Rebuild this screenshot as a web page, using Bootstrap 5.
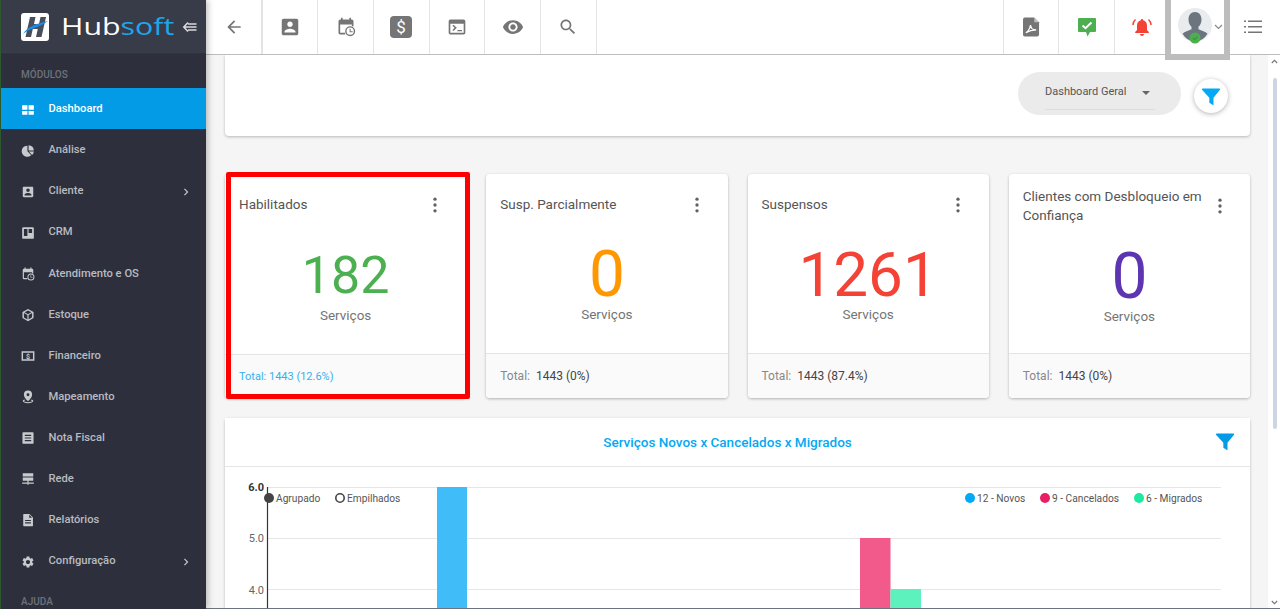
<!DOCTYPE html>
<html lang="pt-BR">
<head>
<meta charset="utf-8">
<title>Hubsoft Dashboard</title>
<link rel="stylesheet" href="https://cdn.jsdelivr.net/npm/bootstrap@5.3.0/dist/css/bootstrap.min.css">
<style>
html,body{height:609px;overflow:hidden}
body{font-family:Roboto,"Liberation Sans",sans-serif;background:#f5f5f5;color:#555;display:flex}
.ico{fill:currentColor;display:block;flex:none}
.side{width:206px;flex:none;height:609px;background:#2d303c;border-left:1px solid #2c5a2c;box-shadow:2px 0 6px rgba(0,0,0,.25);position:relative;z-index:3;overflow:hidden}
.side-top{height:54px;background:#383b48;border-bottom:1px solid #30333f;display:flex;align-items:center;padding-left:20px}
.logo-word{width:113px;margin-left:12px;flex:none}
.logo-text{display:inline-block;font-family:"Open Sans",sans-serif;font-size:23px;line-height:28px;color:#fff;font-weight:400;white-space:nowrap;transform:scaleX(1.32);transform-origin:left center}
.logo-text span{color:#1ea7e8}
.collapse-ico{color:#d8d9dd;margin-left:8px}
.sec-label{height:34px;padding:14px 0 0 20px;font-size:10px;line-height:14px;font-weight:500;color:#6e717b}
.side .nav-link{height:41.1px;display:flex;align-items:center;padding:2px 0 0 20px;font-size:11.2px;font-weight:500;color:#b9bbc0}
.side .nav-link.active{background:#039be5;color:#fff}
.side .nav-link .ico{margin-right:13.500px;color:#c9cacd}
.side .nav-link.active .ico{color:#fff}
.side .nav-link .ico.chev{margin-left:auto;margin-right:13px;color:#c9cacd}
.right-col{flex:1;min-width:0;display:flex;flex-direction:column;height:609px}
.topbar{height:55px;flex:none;background:#fff;border-bottom:1px solid #bdbdbd;display:flex;position:relative;z-index:2}
.tb-btn{width:55.7px;height:54px;display:flex;align-items:center;justify-content:center;border-right:1px solid #e4e4e4;color:#757575;flex:none}
.tb-btn.first{width:56.500px;border-right:2px solid #e4e4e4;padding-left:1px}
.tb-right{margin-left:auto;display:flex;height:54px}
.tb-btn.lft{border-right:0;border-left:1px solid #e4e4e4;width:55.5px}
.tb-btn.bare{border:0;padding-left:2px}
.profile{width:62px;display:flex;align-items:center;padding-left:14px;position:relative;margin-left:-5px;margin-right:-2px}
.profile-chev{margin-left:2px}
.profile-mark{position:absolute;left:1px;right:-4px;top:-1px;height:61px;border:6px solid #bdbdbd;border-top:0;pointer-events:none}
.body-row{flex:1;display:flex;min-height:0}
.content{flex:1;min-width:0;padding:0 18px 0 19px;overflow:hidden}
.scroll-track{width:12px;flex:none;background:#fff;display:flex;flex-direction:column;align-items:center;color:#777}
.scroll-arrow{height:12px;display:flex;align-items:center;justify-content:center}
.scroll-thumb{width:4px;height:351px;background:#ccd6e2;border-radius:2px;margin:11px 0 0 2px}
.bottom-rule{height:1px;flex:none;background:#6c757d}
.filter-card{height:81px;border:0;border-radius:0 0 4px 4px;box-shadow:0 1px 3px rgba(0,0,0,.25);display:flex;flex-direction:row;align-items:center;justify-content:flex-end;padding:0 22px 0 0;margin-bottom:38px}
.sel-pill{width:163px;height:43px;background:#ebebeb;border-radius:22px;margin-right:13px;margin-top:-5px;padding:0 26px 0 27px;display:flex;flex-direction:column;justify-content:center}
.sel-line{display:flex;align-items:center;justify-content:space-between;font-size:11px;color:#555;height:33px;border-bottom:1px solid #ddd;padding-right:5px}
.sel-caret{width:0;height:0;border-left:4.5px solid transparent;border-right:4.5px solid transparent;border-top:4.5px solid #666}
.round-filter{width:34px;height:34px;border-radius:50%;background:#fff;box-shadow:0 1px 5px rgba(0,0,0,.3);display:flex;align-items:center;justify-content:center;color:#03a9f4;margin-top:1px}
.kpi-grid{display:grid;grid-template-columns:repeat(4,1fr);gap:20px;margin-bottom:20px}
.kpi{height:224px;border:0;border-radius:4px;box-shadow:0 1px 3px rgba(0,0,0,.28);position:relative;color:#555;text-align:center}
.kpi-head{height:60px;display:flex;align-items:center;justify-content:space-between;text-align:left;padding:0 21px 0 14px;font-size:13.5px;line-height:19px;color:#555;flex:none}
.kpi-head .ico{color:#616161;margin-top:2px}
.kpi-num{font-size:64px;line-height:56px;margin-top:13px;font-weight:400;height:56px}
.kpi-sub{font-size:13.5px;line-height:20px;margin-top:1px;color:#757575}
.kpi .card-body{padding:0;flex:1}
.kpi .card-footer{height:45px;flex:none;background:#fafafa;border-top:1px solid #e3e3e3;padding:0 14px;text-align:left;font-size:12px;line-height:44px;color:#444;border-radius:0 0 4px 4px}
.kpi .card-footer span{color:#888;margin-right:3px}
.kpi-a .kpi-num{margin-top:14px;font-size:52px}
.kpi-c .kpi-num{font-size:62px}
.kpi-a .card-footer{height:44px;color:#35b0ee;font-size:11px;line-height:43px}
.kpi-d .kpi-head{padding-right:20px;padding-top:3px}
.kpi-d .kpi-head .ico{margin-top:0}
.kpi-d .kpi-num{margin-top:15px}
.red-mark{position:absolute;left:1px;top:-2px;width:244px;height:227px;border:5px solid #f00;border-radius:2px;pointer-events:none}
.chart-card{height:300px;border:0;border-radius:4px;box-shadow:0 1px 3px rgba(0,0,0,.25)}
.chart-head{height:49px;border-bottom:1px solid #e5e5e5;display:flex;align-items:center;justify-content:center;position:relative;font-size:13.5px;font-weight:500;color:#03a9f4;background:#fff;padding-right:20px}
.chart-filter{position:absolute;right:15px;top:13px;color:#039be5}
.chart-svg{display:block}
.chart-svg text{font-family:Roboto,"Liberation Sans",sans-serif;font-size:10.2px;fill:#555}
.chart-svg .ytick{fill:#666;font-size:11px}
.chart-svg .ytick-top{fill:#333;font-weight:700}
.bell-ico{display:block;flex:none}
</style>
</head>
<body>
<svg width="0" height="0" class="position-absolute">
<defs>
<symbol id="i-box" viewBox="0 0 24 24"><path d="M3 5v14c0 1.100.89 2 2 2h14c1.100 0 2-.9 2-2V5c0-1.100-.9-2-2-2H5c-1.110 0-2 .9-2 2zm12 4c0 1.660-1.340 3-3 3s-3-1.340-3-3 1.340-3 3-3 3 1.340 3 3zm-9 8c0-2 4-3.100 6-3.100s6 1.100 6 3.100v1H6v-1z"/></symbol>
<symbol id="i-back" viewBox="0 0 24 24"><path d="M20 11H7.830l5.590-5.590L12 4l-8 8 8 8 1.410-1.410L7.830 13H20v-2z"/></symbol>
<symbol id="i-search" viewBox="0 0 24 24"><path d="M15.500 14h-.79l-.28-.27C15.410 12.590 16 11.110 16 9.500 16 5.910 13.090 3 9.500 3S3 5.910 3 9.500 5.910 16 9.500 16c1.610 0 3.090-.59 4.230-1.570l.27.28v.79l5 4.990L20.490 19l-4.990-5zm-6 0C7.010 14 5 11.990 5 9.500S7.010 5 9.500 5 14 7.010 14 9.500 11.990 14 9.500 14z"/></symbol>
<symbol id="i-eye" viewBox="0 0 24 24"><path d="M12 4.500C7 4.500 2.730 7.610 1 12c1.730 4.390 6 7.500 11 7.500s9.270-3.110 11-7.500c-1.730-4.390-6-7.500-11-7.500zM12 17c-2.760 0-5-2.240-5-5s2.240-5 5-5 5 2.240 5 5-2.240 5-5 5zm0-8c-1.660 0-3 1.340-3 3s1.340 3 3 3 3-1.340 3-3-1.340-3-3-3z"/></symbol>
<symbol id="i-cal" viewBox="0 0 24 24"><path d="M6 1h2v2h8V1h2v2h1a2 2 0 0 1 2 2v6h-2V9H5v10h6v2H5a2 2 0 0 1-2-2V5a2 2 0 0 1 2-2h1z"/><path fill-rule="evenodd" d="M17 11a6 6 0 1 1 0 12 6 6 0 0 1 0-12zm0 1.700a4.300 4.300 0 1 0 0 8.600 4.300 4.300 0 0 0 0-8.600zM16.300 14h1.200v3h2.500v1.200h-3.700z"/></symbol>
<symbol id="i-term" viewBox="0 0 24 24"><path fill-rule="evenodd" d="M4 3h16a2 2 0 0 1 2 2v14a2 2 0 0 1-2 2H4a2 2 0 0 1-2-2V5a2 2 0 0 1 2-2zm0 5v11h16V8z"/><path d="M6.500 10.500 7.800 9.200l4 3.800-4 3.800-1.300-1.300 2.600-2.500zM12.500 15.500H18V17h-5.500z"/></symbol>
<symbol id="i-funnel" viewBox="0 0 24 24"><path d="M2 3h20a1 1 0 0 1 .8 1.600L15 14v8.500a.5.500 0 0 1-.8.400L10 20v-6L1.200 4.600A1 1 0 0 1 2 3z"/></symbol>
<symbol id="i-dots" viewBox="0 0 24 24"><circle cx="12" cy="5" r="2"/><circle cx="12" cy="12" r="2"/><circle cx="12" cy="19" r="2"/></symbol>
<symbol id="i-chev" viewBox="0 0 24 24"><path d="M8.600 16.600 13.200 12 8.600 7.400 10 6l6 6-6 6z"/></symbol>
<symbol id="i-grid" viewBox="0 0 24 24"><path d="M2 4h9v7.500H2zM13 4h9v7.500h-9zM2 13.500h9V20H2zM13 13.500h9V20h-9z"/></symbol>
<symbol id="i-pie" viewBox="0 0 24 24"><path d="M11 3v9.500l6.500 6.600A9.500 9.500 0 1 1 11 3z"/><path d="M13 2a9.500 9.500 0 0 1 9 9h-9zM13.500 13H22a9.500 9.500 0 0 1-3 6z"/></symbol>
<symbol id="i-crm" viewBox="0 0 24 24"><path fill-rule="evenodd" d="M4 2h16a2 2 0 0 1 2 2v16a2 2 0 0 1-2 2H4a2 2 0 0 1-2-2V4a2 2 0 0 1 2-2zm1 3v12h6V5zm8 0v7h6V5z"/></symbol>
<symbol id="i-cube" viewBox="0 0 24 24"><path fill-rule="evenodd" d="M12 1.500 21.500 7v10L12 22.500 2.500 17V7zM5 8.400 11 12v7.500l-6-3.400zm14 0V16l-6 3.500V12zM12 4.200 6.200 7.400 12 10.600l5.800-3.200z"/></symbol>
<symbol id="i-pin" viewBox="0 0 24 24"><path fill-rule="evenodd" d="M12 1a7 7 0 0 1 7 7c0 4.500-5 9.500-7 11-2-1.500-7-6.500-7-11a7 7 0 0 1 7-7zm0 4.500a2.500 2.500 0 1 0 0 5 2.500 2.500 0 0 0 0-5z"/><path d="M3 19c0-1 1-2 3-2.600l1.200 1.400C6 18.100 5 18.500 5 19c0 .9 3 1.800 7 1.800s7-.9 7-1.800c0-.5-1-.9-2.200-1.200l1.200-1.400c2 .6 3 1.600 3 2.600 0 2-4 3.500-9 3.500S3 21 3 19z"/></symbol>
<symbol id="i-note" viewBox="0 0 24 24"><path fill-rule="evenodd" d="M4 2h16a1.500 1.500 0 0 1 1.500 1.500v17A1.500 1.500 0 0 1 20 22H4a1.500 1.500 0 0 1-1.500-1.500v-17A1.500 1.500 0 0 1 4 2zm2.500 4.500v2h11v-2zm0 4.500v2h11v-2zm0 4.500v2h11v-2z"/></symbol>
<symbol id="i-net" viewBox="0 0 24 24"><path d="M3 2h18v5.500H3zM3 9.500h18V15H3zM11 15h2v3h9v2h-9v2h-2v-2H2v-2h9z"/></symbol>
<symbol id="i-doc" viewBox="0 0 24 24"><path fill-rule="evenodd" d="M5 1.500h9.500l6 6V22a.800.800 0 0 1-.8.800H5a1.200 1.200 0 0 1-1.200-1.200V2.700A1.200 1.200 0 0 1 5 1.500zM7 12v1.800h10V12zm0 4v1.800h10V16zM14 3v5h5z"/></symbol>
<symbol id="i-gear" viewBox="0 0 24 24"><path d="M19.140 12.940c.04-.3.06-.61.06-.94 0-.32-.02-.64-.07-.94l2.030-1.580a.49.490 0 0 0 .12-.61l-1.920-3.320a.488.488 0 0 0-.59-.22l-2.390.96c-.5-.38-1.030-.7-1.620-.94l-.36-2.540a.484.484 0 0 0-.48-.41h-3.840c-.24 0-.43.17-.47.41l-.36 2.540c-.59.24-1.130.57-1.620.94l-2.390-.96c-.22-.08-.47 0-.59.22L2.740 8.870c-.12.21-.08.47.12.61l2.030 1.580c-.05.3-.09.63-.09.94s.02.64.07.94l-2.030 1.580a.49.490 0 0 0-.12.61l1.920 3.320c.12.22.37.29.59.22l2.390-.96c.5.38 1.030.7 1.620.94l.36 2.540c.05.24.24.41.48.41h3.840c.24 0 .44-.17.47-.41l.36-2.540c.59-.24 1.130-.56 1.620-.94l2.390.96c.22.08.47 0 .59-.22l1.920-3.320c.12-.22.07-.47-.12-.61l-2.010-1.580zM12 15.600c-1.980 0-3.600-1.620-3.600-3.600s1.620-3.600 3.600-3.600 3.600 1.620 3.600 3.600-1.620 3.600-3.600 3.600z"/></symbol>
</defs>
</svg>

<aside class="side">
  <div class="side-top">
    <svg width="28" height="28" viewBox="0 0 28 28" class="flex-none"><rect width="28" height="28" rx="3" fill="#fff"/><path d="M9 4h5.500l-1.500 7h5l1.500-7H25l-4.500 20H15l1.800-8h-5L10 24H4.500z" fill="#4a4e5c"/><path d="M2 21C7 13 15 11 27 8c-5 3.500-8 5-12 6.500-5 1.500-9 3-13 6.500z" fill="#1a8be6"/></svg>
    <div class="logo-word"><span class="logo-text">Hub<span>soft</span></span></div>
    <svg class="collapse-ico flex-none" width="15" height="12" viewBox="0 0 15 12" fill="none" stroke="currentColor" stroke-width="1.600"><path d="M6 1.500 1.800 6 6 10.500M2 6h12.500M6 3h8.500M6 9h8.500"/></svg>
  </div>
  <div class="sec-label">MÓDULOS</div>
  <nav class="nav flex-column">
    <a class="nav-link active" href="#"><svg class="ico" width="14" height="14"><use href="#i-grid"/></svg>Dashboard</a>
    <a class="nav-link" href="#"><svg class="ico" width="14" height="14"><use href="#i-pie"/></svg>Análise</a>
    <a class="nav-link" href="#"><svg class="ico" width="14" height="14"><use href="#i-box"/></svg>Cliente<svg class="ico chev" width="14" height="14"><use href="#i-chev"/></svg></a>
    <a class="nav-link" href="#"><svg class="ico" width="14" height="14"><use href="#i-crm"/></svg>CRM</a>
    <a class="nav-link" href="#"><svg class="ico" width="14" height="14"><use href="#i-cal"/></svg>Atendimento e OS</a>
    <a class="nav-link" href="#"><svg class="ico" width="14" height="14"><use href="#i-cube"/></svg>Estoque</a>
    <a class="nav-link" href="#"><svg class="ico" width="14" height="14" viewBox="0 0 24 24"><path fill-rule="evenodd" d="M1 4h22v16H1zm2.500 2.500v11h17v-11z"/><text x="12" y="17" text-anchor="middle" font-size="12" font-weight="700" font-family="Roboto,sans-serif">$</text></svg>Financeiro</a>
    <a class="nav-link" href="#"><svg class="ico" width="14" height="14"><use href="#i-pin"/></svg>Mapeamento</a>
    <a class="nav-link" href="#"><svg class="ico" width="14" height="14"><use href="#i-note"/></svg>Nota Fiscal</a>
    <a class="nav-link" href="#"><svg class="ico" width="14" height="14"><use href="#i-net"/></svg>Rede</a>
    <a class="nav-link" href="#"><svg class="ico" width="14" height="14"><use href="#i-doc"/></svg>Relatórios</a>
    <a class="nav-link" href="#"><svg class="ico" width="14" height="14"><use href="#i-gear"/></svg>Configuração<svg class="ico chev" width="14" height="14"><use href="#i-chev"/></svg></a>
  </nav>
  <div class="sec-label">AJUDA</div>
</aside>

<div class="right-col">
  <header class="topbar">
    <div class="tb-btn first"><svg class="ico" width="20" height="20"><use href="#i-back"/></svg></div>
    <div class="tb-btn"><svg class="ico" width="22" height="22"><use href="#i-box"/></svg></div>
    <div class="tb-btn"><svg class="ico" width="20" height="20"><use href="#i-cal"/></svg></div>
    <div class="tb-btn"><svg class="ico" width="22" height="22" viewBox="0 0 22 22"><rect width="22" height="22" rx="4"/><text x="11" y="17" text-anchor="middle" font-size="17" fill="#fff" font-family="Roboto,sans-serif">$</text></svg></div>
    <div class="tb-btn"><svg class="ico" width="20" height="20"><use href="#i-term"/></svg></div>
    <div class="tb-btn"><svg class="ico" width="22" height="22"><use href="#i-eye"/></svg></div>
    <div class="tb-btn"><svg class="ico" width="20" height="20"><use href="#i-search"/></svg></div>
    <div class="tb-right">
      <div class="tb-btn lft"><svg class="ico" width="17" height="20" viewBox="0 0 18 20"><path d="M2 0h10l5 5v13a2 2 0 0 1-2 2H2a2 2 0 0 1-2-2V2a2 2 0 0 1 2-2z"/><path d="M3 16c2-1 4-4 5-8 .5 4 2 5 6 5-3 0-7 .5-11 3z" fill="none" stroke="#fff" stroke-width="1.300"/><path d="M12 0v5h5z" fill="#fff" opacity=".55"/></svg></div>
      <div class="tb-btn lft"><svg class="bell-ico" width="18" height="19" viewBox="0 0 18 19"><path d="M1 0h16a1 1 0 0 1 1 1v12a1 1 0 0 1-1 1h-5l-2.500 4.500L8 14H1a1 1 0 0 1-1-1V1a1 1 0 0 1 1-1z" fill="#4caf50"/><path d="M4.500 7.500 7.500 10.200 13.500 4.500" fill="none" stroke="#fff" stroke-width="2"/></svg></div>
      <div class="tb-btn lft border-end-0"><svg class="bell-ico" width="20" height="18" viewBox="0 0 20 18"><path fill="#f44336" d="M10 1a1.200 1.200 0 0 1 1.200 1.300C13.800 3 15 5 15 7.500V12l1.800 2v1H3.200v-1L5 12V7.500C5 5 6.200 3 8.800 2.300A1.200 1.200 0 0 1 10 1zM8 16h4a2 2 0 0 1-4 0z"/><path d="M3.500 1.500C1.800 3 1 5 1 7M16.500 1.500C18.200 3 19 5 19 7" fill="none" stroke="#f44336" stroke-width="1.500"/></svg></div>
      <div class="profile">
        <svg width="34" height="38" viewBox="0 0 34 38" class="flex-none d-block"><circle cx="17" cy="17" r="17" fill="#e9ecef"/><path d="M17 4c4 0 6.500 3 6.500 7.500 0 3-1.200 5.700-3 7.300v2.500c3 1.200 7 2.500 9 4.500A16.800 16.800 0 0 1 17 34 16.800 16.800 0 0 1 4.500 25.800c2-2 6-3.300 9-4.500v-2.500c-1.800-1.600-3-4.300-3-7.300C10.500 7 13 4 17 4z" fill="#6c757d"/><circle cx="17" cy="30" r="5.500" fill="#4caf50"/><path d="M14.800 30l1.700 1.600 3-3" fill="none" stroke="#3d9140" stroke-width="1.200"/></svg>
        <svg class="profile-chev flex-none" width="9" height="6" viewBox="0 0 9 6" fill="none" stroke="#888" stroke-width="1.200"><path d="M1 1l3.500 3.500L8 1"/></svg>
        <div class="profile-mark"></div>
      </div>
      <div class="tb-btn bare"><svg width="18" height="14" viewBox="0 0 18 14" fill="#757575"><rect x="0" y="0.500" width="2" height="1.500"/><rect x="4" y="0.500" width="14" height="1.500"/><rect x="0" y="6" width="2" height="1.500"/><rect x="4" y="6" width="14" height="1.500"/><rect x="0" y="11.500" width="2" height="1.500"/><rect x="4" y="11.500" width="14" height="1.500"/></svg></div>
    </div>
  </header>

  <div class="body-row">
    <main class="content">
      <section class="card filter-card">
        <div class="sel-pill"><div class="sel-line">Dashboard Geral<span class="sel-caret"></span></div></div>
        <div class="round-filter"><svg class="ico" width="20" height="20"><use href="#i-funnel"/></svg></div>
      </section>

      <section class="kpi-grid">
        <div class="card kpi kpi-a">
          <div class="kpi-head">Habilitados<svg class="ico" width="20" height="20"><use href="#i-dots"/></svg></div>
          <div class="card-body"><div class="kpi-num" style="color:#4caf50">182</div><div class="kpi-sub">Serviços</div></div>
          <div class="card-footer">Total: 1443 (12.6%)</div>
          <div class="red-mark"></div>
        </div>
        <div class="card kpi">
          <div class="kpi-head">Susp. Parcialmente<svg class="ico" width="20" height="20"><use href="#i-dots"/></svg></div>
          <div class="card-body"><div class="kpi-num" style="color:#ff9800">0</div><div class="kpi-sub">Serviços</div></div>
          <div class="card-footer"><span>Total:</span> 1443 (0%)</div>
        </div>
        <div class="card kpi kpi-c">
          <div class="kpi-head">Suspensos<svg class="ico" width="20" height="20"><use href="#i-dots"/></svg></div>
          <div class="card-body"><div class="kpi-num" style="color:#f44336">1261</div><div class="kpi-sub">Serviços</div></div>
          <div class="card-footer"><span>Total:</span> 1443 (87.4%)</div>
        </div>
        <div class="card kpi kpi-d">
          <div class="kpi-head"><div>Clientes com Desbloqueio em Confiança</div><svg class="ico" width="20" height="20"><use href="#i-dots"/></svg></div>
          <div class="card-body"><div class="kpi-num" style="color:#5e35b1">0</div><div class="kpi-sub">Serviços</div></div>
          <div class="card-footer"><span>Total:</span> 1443 (0%)</div>
        </div>
      </section>

      <section class="card chart-card">
        <div class="chart-head">Serviços Novos x Cancelados x Migrados<svg class="ico chart-filter" width="20" height="20"><use href="#i-funnel"/></svg></div>
        <svg class="chart-svg" width="1025" height="200" viewBox="225 467 1025 200">
          <g stroke="#e6e6e6" stroke-width="1"><path d="M267 487.500H1221M267 538.500H1221M267 589.500H1221"/></g>
          <rect x="437" y="487" width="30" height="140" fill="#40bdf8"/>
          <rect x="860" y="538" width="30.500" height="90" fill="#f15a8a"/>
          <rect x="890.500" y="589" width="30.500" height="40" fill="#5df2bd"/>
          <path d="M267.500 487V620" stroke="#333" stroke-width="1.200"/>
          <text class="ytick ytick-top" x="264" y="491" text-anchor="end">6.0</text>
          <text class="ytick" x="264" y="542" text-anchor="end">5.0</text>
          <text class="ytick" x="264" y="593.500" text-anchor="end">4.0</text>
          <circle cx="269" cy="498" r="5" fill="#444"/>
          <text x="276" y="501.500">Agrupado</text>
          <circle cx="340" cy="498" r="4.200" fill="#fff" stroke="#444" stroke-width="1.600"/>
          <text x="347" y="501.500">Empilhados</text>
          <circle cx="970" cy="498" r="5" fill="#03a9f4"/>
          <text x="977" y="501.500">12 - Novos</text>
          <circle cx="1045" cy="498" r="5" fill="#e91e63"/>
          <text x="1052" y="501.500">9 - Cancelados</text>
          <circle cx="1139" cy="498" r="5" fill="#1de9a0"/>
          <text x="1146" y="501.500">6 - Migrados</text>
        </svg>
      </section>
    </main>
    <div class="scroll-track">
      <div class="scroll-arrow"><svg width="7" height="5" viewBox="0 0 7 5" fill="none" stroke="#777" stroke-width="1.100"><path d="M.8 4 3.500 1.300 6.200 4"/></svg></div>
      <div class="scroll-thumb"></div>
      <div class="scroll-arrow mt-auto"><svg width="7" height="5" viewBox="0 0 7 5" fill="none" stroke="#777" stroke-width="1.100"><path d="M.8 1 3.500 3.700 6.200 1"/></svg></div>
    </div>
  </div>
  <div class="bottom-rule"></div>
</div>
<script src="https://cdn.jsdelivr.net/npm/bootstrap@5.3.0/dist/js/bootstrap.bundle.min.js"></script>
</body>
</html>
